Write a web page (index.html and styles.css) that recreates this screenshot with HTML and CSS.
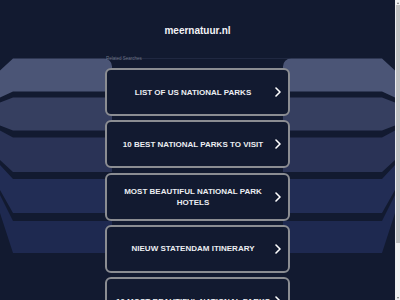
FILE: index.html
```html
<!DOCTYPE html>
<html>
<head>
    <title>meernatuur.nl</title>
    <meta name="viewport" content="width=device-width, initial-scale=1.0">
    <link rel="stylesheet" href="styles.css">
</head>
<body>
    <svg class="backdrop" viewBox="0 0 395 300" aria-hidden="true">
        <polygon fill="#4b5576" points="13,58.5 382,58.5 395,70.5 395,97.5 382,91.5 13,91.5 0,97.5 0,70.5"/>
        <polygon fill="#363f60" points="13,97.5 382,97.5 395,102.5 395,125.5 382,130.5 13,130.5 0,125.5 0,102.5"/>
        <polygon fill="#2a3356" points="13,137.5 382,137.5 395,130.5 395,160 382,172 13,172 0,160 0,130.5"/>
        <polygon fill="#222d55" points="13,179 382,179 395,165 395,190 382,213 13,213 0,190 0,165"/>
        <polygon fill="#1e2950" points="13,221 382,221 395,195 395,213 382,253 13,253 0,213 0,195"/>
        <!-- dark column behind the list -->
        <path fill="#121a30" d="M104 58.5 A8 8 0 0 1 112 66.5 V300 H283 V66.5 A8 8 0 0 1 291 58.5 Z"/>
    </svg>

    <div class="page">
        <div class="domain">meernatuur.nl</div>
        <div class="related">Related Searches</div>

        <div class="list">
            <a class="card" href="#"><span class="label">List of US National Parks</span><svg class="chev" viewBox="0 0 6 10"><polyline points="1,1 5,5 1,9"/></svg></a>
            <a class="card" href="#"><span class="label">10 Best National Parks to Visit</span><svg class="chev" viewBox="0 0 6 10"><polyline points="1,1 5,5 1,9"/></svg></a>
            <a class="card" href="#"><span class="label">Most Beautiful National Park Hotels</span><svg class="chev" viewBox="0 0 6 10"><polyline points="1,1 5,5 1,9"/></svg></a>
            <a class="card" href="#"><span class="label">Nieuw Statendam Itinerary</span><svg class="chev" viewBox="0 0 6 10"><polyline points="1,1 5,5 1,9"/></svg></a>
            <a class="card" href="#"><span class="label">10 Most Beautiful National Parks</span><svg class="chev" viewBox="0 0 6 10"><polyline points="1,1 5,5 1,9"/></svg></a>
        </div>
    </div>

    <!-- classic scrollbar as it shows in the capture -->
    <div class="scrollbar" aria-hidden="true">
        <span class="arrow up"></span>
        <div class="thumb"></div>
        <span class="arrow down"></span>
    </div>
</body>
</html>
```

FILE: styles.css
```css
html {
    background-color: #121a30;
}

body {
    margin: 0;
    padding-right: 5px;
    font-family: "Liberation Sans", Arial, sans-serif;
    color: #eceef2;
    position: relative;
}

.backdrop {
    position: absolute;
    top: 0;
    left: 0;
    width: 395px;
    height: 300px;
    z-index: 0;
}

.page {
    position: relative;
    z-index: 1;
    width: 185px;
    margin: 0 auto;
    padding: 24px 0 41px;
}

.domain {
    text-align: center;
    font-size: 10px;
    font-weight: bold;
    line-height: 14px;
    color: #f2f3f6;
}

.related {
    margin-top: 17.5px;
    font-size: 4.5px;
    line-height: 5px;
    color: #6b7184;
    padding-left: 1px;
}

.list {
    margin-top: 7.5px;
    display: flex;
    flex-direction: column;
    gap: 4.3px;
}

.card {
    box-sizing: border-box;
    height: 48px;
    display: flex;
    align-items: center;
    border: 2px solid #8b8d92;
    border-radius: 6px;
    background-color: #121a30;
    color: #eceef2;
    text-decoration: none;
}

.label {
    flex: 1;
    text-align: center;
    text-transform: uppercase;
    font-size: 8px;
    font-weight: bold;
    line-height: 11px;
    padding-left: 6px;
}

.chev {
    width: 6px;
    height: 10px;
    margin: 0 7px 0 2px;
    flex-shrink: 0;
}

.chev polyline {
    fill: none;
    stroke: #ffffff;
    stroke-width: 1.6;
    stroke-linecap: round;
    stroke-linejoin: round;
}

.scrollbar {
    position: fixed;
    top: 0;
    right: 0;
    width: 5px;
    height: 300px;
    background: #f1f1f1;
    display: flex;
    flex-direction: column;
    align-items: center;
    z-index: 5;
}

.thumb {
    width: 4px;
    height: 238px;
    background: #c4c4c4;
}

.arrow {
    width: 0;
    height: 0;
    margin: 1.5px 0;
    border-left: 1.5px solid transparent;
    border-right: 1.5px solid transparent;
}

.arrow.up {
    border-bottom: 2px solid #7a7a7a;
}

.arrow.down {
    margin-top: auto;
    border-top: 2px solid #7a7a7a;
}
```
